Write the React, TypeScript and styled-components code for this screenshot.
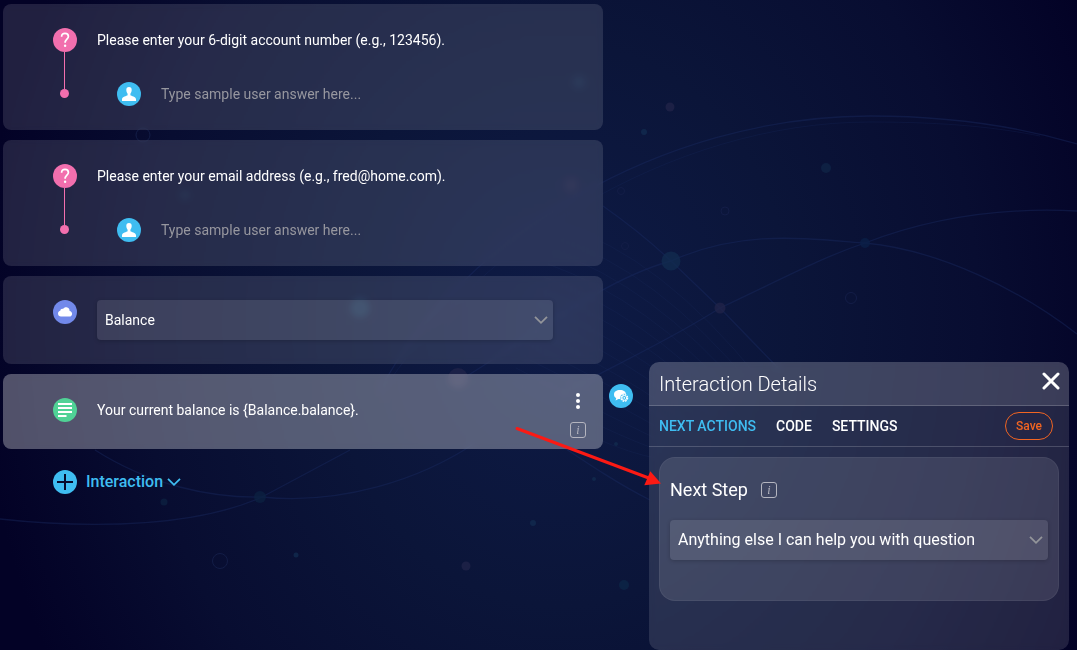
import React, { useId } from 'react';
import styled, { createGlobalStyle } from 'styled-components';

const GlobalStyle = createGlobalStyle`
  * { box-sizing: border-box; }
  body {
    margin: 0;
    background: #04042b;
    color: #fff;
    font-family: Roboto, "Liberation Sans", sans-serif;
    font-size: 14px;
    line-height: 20px;
  }
  button, input, select { font: inherit; color: inherit; }
  button { border: 0; padding: 0; background: none; cursor: pointer; }
`;

const sky = '#3fbdf1';
const pink = '#f26fae';

const Page = styled.div`
  position: relative;
  display: grid;
  grid-template-columns: minmax(0, 646fr) minmax(0, 420fr);
  min-height: 100vh;
  padding: 4px 8px 0 3px;
  background: radial-gradient(ellipse 54% 108% at 52% 50%, #0e1b46 0%, #0b1539 40%, #080d31 72%, #030226 100%);
`;

const Overlay = styled.svg`
  position: absolute;
  inset: 0;
  width: 100%;
  height: 100%;
  pointer-events: none;
`;

const Flow = styled.main`
  position: relative;
  display: flex;
  flex-direction: column;
  gap: 10px;
`;

const Step = styled.div`
  display: grid;
  grid-template-columns: minmax(0, 1fr) 46px;
`;

const Card = styled.section<{ $active?: boolean }>`
  display: flex;
  align-items: flex-start;
  gap: 20px;
  padding: 24px 50px;
  padding-right: ${(p) => (p.$active ? '16px' : '50px')};
  border-radius: 8px;
  background: ${(p) => (p.$active ? 'rgba(255,255,255,0.31)' : 'rgba(255,255,255,0.12)')};
  backdrop-filter: blur(3px);
`;

const Badge = styled.span<{ $color: string }>`
  display: grid;
  place-items: center;
  flex: none;
  width: 24px;
  height: 24px;
  border-radius: 50%;
  background: ${(p) => p.$color};
`;

const Thread = styled.div`
  display: flex;
  flex-direction: column;
  width: 24px;
`;

const Tail = styled.div`
  display: flex;
  flex-direction: column;
  align-items: center;
  padding-right: 1px;
`;

const Stem = styled.span`
  width: 1px;
  height: 37px;
  background: ${pink};
`;

const Dot = styled.span`
  width: 9px;
  height: 9px;
  border-radius: 50%;
  background: ${pink};
`;

const Body = styled.div`
  display: flex;
  flex: 1;
  flex-direction: column;
  gap: 30px;
  min-width: 0;
`;

const Line = styled.p`
  margin: 0;
  line-height: 24px;
`;

const Answer = styled.label`
  display: flex;
  align-items: center;
  gap: 20px;
  height: 24px;
  padding-left: 20px;
`;

const AnswerInput = styled.input`
  flex: 1;
  min-width: 0;
  padding: 0;
  border: 0;
  outline: 0;
  background: none;
  line-height: 20px;
  &::placeholder { color: #97979f; opacity: 1; }
`;

const PickerBox = styled.div`
  display: grid;
  flex: 1;
  align-items: center;
  min-width: 0;
  border-radius: 4px;
  background: rgba(255, 255, 255, 0.11);
  box-shadow: 0 1px 4px rgba(0, 0, 0, 0.2);
  & > * { grid-area: 1 / 1; }
  & > svg { justify-self: end; margin-right: 5px; pointer-events: none; }
`;

const Picker = styled.select<{ $large?: boolean }>`
  appearance: none;
  width: 100%;
  height: 40px;
  padding: 0 28px 0 8px;
  border: 0;
  background: none;
  font-size: ${(p) => (p.$large ? '16px' : '14px')};
  & option { color: #111; }
`;

const SelectSlot = styled.div`
  display: flex;
  flex: 1;
`;

const CardTools = styled.div`
  display: flex;
  flex-direction: column;
  align-items: center;
  gap: 13px;
  width: 18px;
  margin: -5px 0 -13px;
`;

const IconButton = styled.button`
  display: grid;
  place-items: center;
`;

const ChatButton = styled(IconButton)`
  width: 24px;
  height: 24px;
  margin: 10px 0 0 6px;
  border-radius: 50%;
  background: ${sky};
`;

const AddButton = styled.button`
  display: flex;
  align-items: center;
  align-self: flex-start;
  gap: 9px;
  margin: 11px 50px;
  color: ${sky};
  font-size: 16px;
  font-weight: 500;
  line-height: 24px;
`;

const AddLabel = styled.span`
  display: flex;
  align-items: center;
  gap: 4px;
`;

const Panel = styled.aside`
  position: relative;
  align-self: end;
  padding-bottom: 49px;
  overflow: hidden;
  border-radius: 10px;
  background: rgba(255, 255, 255, 0.12);
  backdrop-filter: blur(3px);
`;

const PanelHeader = styled.header`
  display: flex;
  align-items: center;
  justify-content: space-between;
  height: 44px;
  padding: 0 9px 0 10px;
  border-bottom: 1px solid rgba(255, 255, 255, 0.18);
  background: rgba(255, 255, 255, 0.11);
`;

const PanelTitle = styled.h2`
  margin: 0;
  font-size: 20px;
  font-weight: 300;
  line-height: 24px;
`;

const CloseButton = styled(IconButton)`
  align-self: flex-start;
  padding-top: 10px;
`;

const PanelNav = styled.nav`
  display: flex;
  align-items: center;
  gap: 20px;
  height: 41px;
  padding: 0 16px 0 10px;
  border-bottom: 1px solid rgba(255, 255, 255, 0.18);
`;

const Tab = styled.button<{ $active?: boolean }>`
  color: ${(p) => (p.$active ? sky : '#fff')};
  font-weight: 500;
`;

const SaveButton = styled.button`
  width: 48px;
  height: 28px;
  margin-left: auto;
  border: 1px solid #f26522;
  border-radius: 14px;
  color: #f26522;
  font-size: 12px;
  font-weight: 500;
`;

const StepCard = styled.section`
  display: flex;
  flex-direction: column;
  gap: 18px;
  margin: 10px 10px 0;
  padding: 20px 10px 40px;
  border: 1px solid rgba(255, 255, 255, 0.05);
  border-radius: 16px;
  background: rgba(255, 255, 255, 0.11);
`;

const StepHeading = styled.h3`
  display: flex;
  align-items: center;
  gap: 13px;
  margin: 0;
  font-size: 18px;
  font-weight: 400;
  line-height: 24px;
`;

const InfoBox = styled.button`
  display: grid;
  place-items: center;
  width: 16px;
  height: 16px;
  border: 1px solid #b4b5bf;
  border-radius: 3px;
  color: #b4b5bf;
  font-family: "Liberation Serif", serif;
  font-size: 12px;
  font-style: italic;
  line-height: 12px;
`;

const Info = () => <InfoBox type="button" aria-label="Information">i</InfoBox>;

const Chevron = ({ color = '#93959a' }: { color?: string }) => (
  <svg width="14" height="10" viewBox="0 0 14 10" fill="none" stroke={color} strokeWidth="1.8" aria-hidden="true">
    <path d="M1 1.8 7 7.8 13 1.8" />
  </svg>
);

const UserIcon = () => (
  <svg width="16" height="16" viewBox="0 0 16 16" fill="#fff" aria-hidden="true">
    <path d="M8 1C6.2 1 5.2 2.3 5.3 4.1C5.4 6 6 7 6.6 7.7V9.3C5.7 10.2 1.2 10.6 1 13.2V15H15V13.2C14.8 10.6 10.3 10.2 9.4 9.3V7.7C10 7 10.6 6 10.7 4.1C10.8 2.3 9.8 1 8 1Z" />
  </svg>
);

const QuestionIcon = () => (
  <svg width="12" height="16" viewBox="0 0 12 16" fill="none" aria-hidden="true">
    <path d="M2.6 4.7C2.6 2.5 4 1.4 6 1.4C8 1.4 9.4 2.5 9.4 4.5C9.4 7.2 6.1 7.2 6.1 10.8" stroke="#fff" strokeWidth="1.7" />
    <circle cx="6.1" cy="13.8" r="1.2" fill="#fff" />
  </svg>
);

const CloudIcon = () => (
  <svg width="16" height="12" viewBox="0 0 16 12" fill="#fff" aria-hidden="true">
    <path d="M4 10.500A3 3 0 0 1 1 7.600C1 6.100 2 5 3.300 4.800C3.400 3.300 4.700 2.500 6 3C6.800 1.600 8.200 1 9.600 1.200C11.600 1.500 12.800 3.100 12.600 5C14 5.200 15.100 6.300 15.100 7.700A2.900 2.900 0 0 1 12.200 10.500Z" />
  </svg>
);

const TextIcon = () => (
  <svg width="16" height="16" viewBox="0 0 16 16" stroke="#fff" strokeWidth="2.2" aria-hidden="true">
    <path d="M1 2H15M1 6H15M1 10H15M1 14H9.5" />
  </svg>
);

const ChatGearIcon = () => (
  <svg width="16" height="14" viewBox="0 0 16 14" aria-hidden="true">
    <path d="M7 1C3.4 1 1 2.8 1 5.4C1 7.2 1.8 8.3 3.2 9.1L2.6 11.6L5.4 9.9H8C11 9.6 13 8 13 5.4C13 2.8 10.6 1 7 1Z" fill="#fff" />
    <circle cx="11.3" cy="8.9" r="4.2" fill={sky} />
    <circle cx="11.3" cy="8.9" r="3.3" fill="none" stroke="#fff" strokeWidth="1.4" strokeDasharray="1.7 .9" />
    <circle cx="11.3" cy="8.9" r="2.4" fill="none" stroke="#fff" />
    <circle cx="11.3" cy="8.9" r=".8" fill="#fff" />
  </svg>
);

const Backdrop = () => (
  <Overlay viewBox="0 0 1077 650" preserveAspectRatio="xMidYMid slice" fill="none" aria-hidden="true">
    <g stroke="#1a2b62" strokeWidth="1.3" opacity=".42">
      <path d="M380 390C460 240 660 116 870 116C950 116 1020 127 1077 144" />
      <path d="M380 396C470 250 670 122 870 122C950 122 1000 128 1040 136" strokeWidth=".6" />
      <path d="M603 206C630 225 652 243 671 261L720 308L780 370" />
      <path d="M460 380C520 345 600 280 671 261C740 230 800 238 865 243C940 250 1020 290 1077 334" />
      <path d="M560 395C620 362 670 340 720 308C780 280 820 258 865 243C930 218 1000 207 1077 211" />
      <path d="M95 450C150 485 210 498 262 497C340 505 420 480 475 443" />
      <path d="M0 519C100 530 200 525 262 497L350 450" />
      <path d="M560 445C590 465 620 485 650 500" />
    </g>
    <g stroke="#1b2c5e" strokeWidth=".7" opacity=".35">
      {Array.from({ length: 14 }, (_, i) => (
        <path key={i} d={`M${560 - i * 4} ${225 + i * 13}Q${660 - i * 4} ${255 + i * 15} ${760 - i * 8} ${380 + i * 6}`} />
      ))}
    </g>
    <g fill="#122c50" opacity=".75">
      <circle cx="671" cy="261" r="9.5" />
      <circle cx="865" cy="243" r="5" fill="#0a2048" />
      <circle cx="826" cy="168" r="5" fill="#102547" />
      <circle cx="644" cy="132" r="3" />
      <circle cx="260" cy="497" r="6" fill="#0c2242" />
      <circle cx="164" cy="502" r="3.5" fill="#0c2242" />
      <circle cx="360" cy="308" r="10" />
      <circle cx="533" cy="523" r="3" />
      <circle cx="624" cy="585" r="5" fill="#0c2748" />
      <circle cx="594" cy="479" r="2" />
      <circle cx="616" cy="444" r="2" />
      <circle cx="296" cy="555" r="2.5" />
      <circle cx="579" cy="82" r="7" fill="#0f2245" />
      <circle cx="185" cy="195" r="6" fill="#0c1b3c" />
    </g>
    <g fill="#222449" opacity=".75">
      <circle cx="670" cy="107" r="4.5" />
      <circle cx="720" cy="308" r="5.5" />
      <circle cx="466" cy="566" r="4.5" />
      <circle cx="458" cy="378" r="10" />
      <circle cx="571" cy="185" r="8" fill="#191e43" />
    </g>
    <g stroke="#131d47">
      <circle cx="851" cy="298" r="5.5" />
      <circle cx="725" cy="211" r="4" />
      <circle cx="621" cy="191" r="3.5" />
      <circle cx="220" cy="561" r="7.5" />
      <circle cx="143" cy="135" r="7" />
      <circle cx="625" cy="246" r="3.5" />
    </g>
  </Overlay>
);

const Question = ({ text }: { text: string }) => (
  <Step>
    <Card>
      <Thread>
        <Badge $color={pink}><QuestionIcon /></Badge>
        <Tail><Stem /><Dot /></Tail>
      </Thread>
      <Body>
        <Line>{text}</Line>
        <Answer>
          <Badge $color={sky}><UserIcon /></Badge>
          <AnswerInput aria-label="Sample user answer" placeholder="Type sample user answer here..." />
        </Answer>
      </Body>
    </Card>
  </Step>
);

const Dropdown = ({ label, value, large }: { label: string; value: string; large?: boolean }) => {
  const id = useId();
  return (
    <PickerBox>
      <Picker id={id} aria-label={label} $large={large} defaultValue={value}>
        <option>{value}</option>
      </Picker>
      <Chevron />
    </PickerBox>
  );
};

export default function App() {
  return (
    <>
      <GlobalStyle />
      <Page>
        <Backdrop />
        <Flow>
          <Question text="Please enter your 6-digit account number (e.g., 123456)." />
          <Question text="Please enter your email address (e.g., fred@home.com)." />
          <Step>
            <Card>
              <Badge $color="#7289ea"><CloudIcon /></Badge>
              <SelectSlot><Dropdown label="Service" value="Balance" /></SelectSlot>
            </Card>
          </Step>
          <Step>
            <Card $active>
              <Badge $color="#50d296"><TextIcon /></Badge>
              <Body><Line>{'Your current balance is {Balance.balance}.'}</Line></Body>
              <CardTools>
                <IconButton type="button" aria-label="More options">
                  <svg width="6" height="16" viewBox="0 0 6 16" fill="#fff" aria-hidden="true">
                    <circle cx="3" cy="2" r="2" /><circle cx="3" cy="8" r="2" /><circle cx="3" cy="14" r="2" />
                  </svg>
                </IconButton>
                <Info />
              </CardTools>
            </Card>
            <ChatButton type="button" aria-label="Interaction details"><ChatGearIcon /></ChatButton>
          </Step>
          <AddButton type="button">
            <Badge $color={sky}>
              <svg width="16" height="16" viewBox="0 0 16 16" stroke="#070b2c" strokeWidth="2" aria-hidden="true">
                <path d="M8 0V16M0 8H16" />
              </svg>
            </Badge>
            <AddLabel>Interaction <Chevron color={sky} /></AddLabel>
          </AddButton>
        </Flow>

        <Panel>
          <PanelHeader>
            <PanelTitle>Interaction Details</PanelTitle>
            <CloseButton type="button" aria-label="Close">
              <svg width="18" height="18" viewBox="0 0 18 18" stroke="#fff" strokeWidth="3" strokeLinecap="round" aria-hidden="true">
                <path d="M2 2 16 16M16 2 2 16" />
              </svg>
            </CloseButton>
          </PanelHeader>
          <PanelNav>
            <Tab type="button" $active>NEXT ACTIONS</Tab>
            <Tab type="button">CODE</Tab>
            <Tab type="button">SETTINGS</Tab>
            <SaveButton type="button">Save</SaveButton>
          </PanelNav>
          <StepCard>
            <StepHeading>Next Step <Info /></StepHeading>
            <Dropdown large label="Next step" value="Anything else I can help you with question" />
          </StepCard>
        </Panel>

        <Overlay viewBox="0 0 1077 650" preserveAspectRatio="xMidYMid slice" aria-hidden="true">
          <path d="M517 428.5 650 478.5" stroke="#fb1a14" strokeWidth="3" strokeLinecap="round" />
          <path d="M661 483.5 644.3 485.3 650.3 471.3Z" fill="#fb1a14" />
        </Overlay>
      </Page>
    </>
  );
}
